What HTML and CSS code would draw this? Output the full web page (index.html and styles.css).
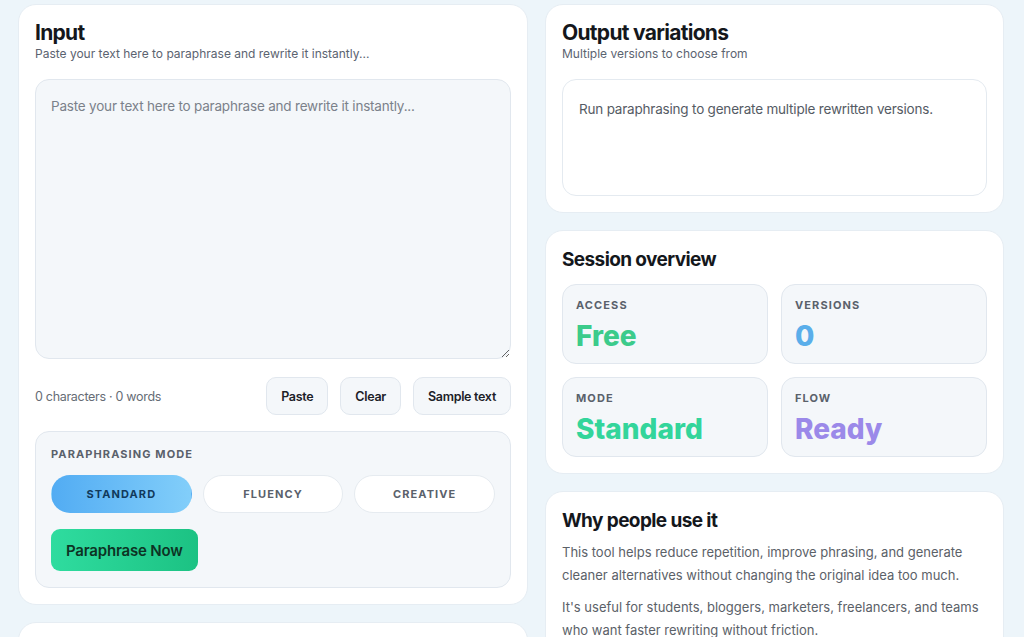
FILE: index.html
```html
<!DOCTYPE html>
<html lang="en">
<head>
  <meta charset="UTF-8">
  <title>Paraphrasing Tool</title>
  <link rel="stylesheet" href="styles.css">
</head>
<body>

  <div class="layout">
    <div class="col">
      <section class="card">
        <h2>Input</h2>
        <p class="sub">Paste your text here to paraphrase and rewrite it instantly...</p>
        <textarea class="input-box" placeholder="Paste your text here to paraphrase and rewrite it instantly..."></textarea>

        <div class="tools">
          <span class="count">0 characters · 0 words</span>
          <div class="tool-btns">
            <button class="btn-light">Paste</button>
            <button class="btn-light">Clear</button>
            <button class="btn-light">Sample text</button>
          </div>
        </div>

        <div class="mode-box">
          <div class="label">Paraphrasing mode</div>
          <div class="modes">
            <button class="pill pill-active">Standard</button>
            <button class="pill">Fluency</button>
            <button class="pill">Creative</button>
          </div>
          <button class="btn-go">Paraphrase Now</button>
        </div>
      </section>

      <section class="card"></section>
    </div>

    <div class="col">
      <section class="card">
        <h2>Output variations</h2>
        <p class="sub">Multiple versions to choose from</p>
        <div class="output-box">Run paraphrasing to generate multiple rewritten versions.</div>
      </section>

      <section class="card">
        <h3>Session overview</h3>
        <div class="stats">
          <div class="stat">
            <div class="label">Access</div>
            <div class="value c-green">Free</div>
          </div>
          <div class="stat">
            <div class="label">Versions</div>
            <div class="value c-blue">0</div>
          </div>
          <div class="stat">
            <div class="label">Mode</div>
            <div class="value c-mint">Standard</div>
          </div>
          <div class="stat">
            <div class="label">Flow</div>
            <div class="value c-purple">Ready</div>
          </div>
        </div>
      </section>

      <section class="card">
        <h3 class="tight">Why people use it</h3>
        <p class="text">This tool helps reduce repetition, improve phrasing, and generate cleaner alternatives without changing the original idea too much.</p>
        <p class="text">It's useful for students, bloggers, marketers, freelancers, and teams who want faster rewriting without friction.</p>
      </section>
    </div>
  </div>

</body>
</html>
```

FILE: styles.css
```css
body {
  margin: 0;
  background: #edf5fa;
  color: #14171c;
  font-family: 'Inter', 'Noto Sans', sans-serif;
  letter-spacing: -0.3px;
}

.layout {
  display: grid;
  grid-template-columns: 10fr 9fr;
  gap: 17px;
  padding: 4px 20px 0 18px;
}

.col {
  display: flex;
  flex-direction: column;
  gap: 17px;
}

.card {
  background: #fff;
  border: 1px solid #e6edf3;
  border-radius: 18px;
  padding: 16px;
  min-height: 60px;
}

h2 {
  font-size: 21px;
  font-weight: 700;
  margin: 0;
  line-height: 24px;
  letter-spacing: -0.7px;
}

h3 {
  font-size: 19px;
  font-weight: 700;
  margin: 1px 0 12px;
  line-height: 24px;
  letter-spacing: -0.6px;
}

h3.tight {
  margin-bottom: 8px;
}

.sub {
  font-size: 12px;
  color: #5b6370;
  margin: 1px 0 18px;
  letter-spacing: 0;
}

.input-box {
  display: block;
  box-sizing: border-box;
  width: 100%;
  height: 280px;
  background: #f4f7fa;
  border: 1px solid #e1e7ee;
  border-radius: 14px;
  padding: 18px 15px;
  font-family: inherit;
  font-size: 13.5px;
  letter-spacing: -0.2px;
  color: #333;
  resize: vertical;
}

.input-box::placeholder {
  color: #7b818a;
}

.tools {
  display: flex;
  justify-content: space-between;
  align-items: center;
  margin: 18px 0 16px;
}

.count {
  font-size: 12.5px;
  color: #666c75;
}

.tool-btns {
  display: flex;
  gap: 12px;
}

.btn-light {
  height: 38px;
  padding: 0 14px;
  background: #f4f7fa;
  border: 1px solid #e1e7ee;
  border-radius: 10px;
  font-family: inherit;
  font-size: 12.5px;
  font-weight: 600;
  letter-spacing: -0.3px;
  color: #1c2128;
}

.mode-box {
  background: #f4f7fa;
  border: 1px solid #e1e7ee;
  border-radius: 14px;
  padding: 15px 15px 16px;
}

.label {
  font-size: 11px;
  font-weight: 700;
  letter-spacing: 1.1px;
  text-transform: uppercase;
  color: #5a616b;
}

.modes {
  display: grid;
  grid-template-columns: repeat(3, 1fr);
  gap: 11px;
  margin: 14px 0 16px;
}

.pill {
  height: 38px;
  border-radius: 20px;
  border: 1px solid #e6ebf0;
  background: #fff;
  font-family: inherit;
  font-size: 11px;
  font-weight: 700;
  letter-spacing: 1.1px;
  text-transform: uppercase;
  color: #5a616b;
}

.pill-active {
  background: linear-gradient(90deg, #52acf3, #82cefa);
  border-color: transparent;
  color: #113a5c;
}

.btn-go {
  height: 42px;
  padding: 0 15px;
  border: none;
  border-radius: 9px;
  background: linear-gradient(90deg, #2fdc9f, #1cc283);
  font-family: inherit;
  font-size: 15px;
  font-weight: 600;
  letter-spacing: -0.2px;
  color: #0d3324;
}

.output-box {
  height: 117px;
  box-sizing: border-box;
  border: 1px solid #e4eaf0;
  border-radius: 14px;
  padding: 21px 16px;
  font-size: 13.5px;
  color: #555b64;
  letter-spacing: -0.2px;
}

.stats {
  display: grid;
  grid-template-columns: 1fr 1fr;
  gap: 13px 13px;
}

.stat {
  height: 80px;
  box-sizing: border-box;
  background: #f4f7fa;
  border: 1px solid #e1e7ee;
  border-radius: 14px;
  padding: 13px 13px;
}

.value {
  font-size: 28px;
  font-weight: 800;
  letter-spacing: 0;
  margin-top: 8px;
  line-height: 32px;
}

.c-green { color: #3ccb8b; }
.c-blue { color: #5aaeea; }
.c-mint { color: #33d59b; }
.c-purple { color: #9b89e9; }

.text {
  font-size: 13px;
  line-height: 23px;
  color: #5b6168;
  margin: 0 0 9px;
  letter-spacing: 0;
}
```
